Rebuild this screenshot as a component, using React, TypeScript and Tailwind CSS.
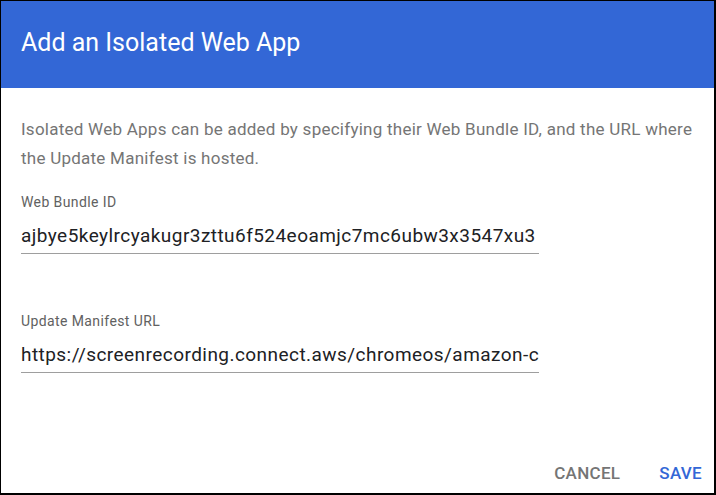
import React from "react";

export default function App() {
  return (
    <div
      className="w-[716px] h-[495px] border-l border-t border-r-2 border-b-2 border-black bg-white flex flex-col overflow-hidden"
      style={{ fontFamily: "Roboto, 'Noto Sans', sans-serif" }}
    >
      <div className="h-[87px] bg-[#3367d6] flex items-center px-[20px] shrink-0">
        <h1 className="text-white text-[25px] font-normal leading-none pb-[4px]">Add an Isolated Web App</h1>
      </div>
      <div className="flex-1 flex flex-col px-[20px] pt-[27px]">
        <p className="text-[17px] leading-[29px] text-[#757575] tracking-[0.25px] -mr-[10px]">
          Isolated Web Apps can be added by specifying their Web Bundle ID, and the URL where the Update Manifest is hosted.
        </p>
        <div className="mt-[20px] w-[518px]">
          <div className="text-[14px] leading-[18px] text-[#616161] tracking-[0.4px]">Web Bundle ID</div>
          <div className="mt-[13px] text-[19px] leading-[23px] text-[#202124] tracking-[0.45px] pb-[6px] border-b border-[#9e9e9e] whitespace-nowrap overflow-hidden">
            ajbye5keylrcyakugr3zttu6f524eoamjc7mc6ubw3x3547xu3
          </div>
        </div>
        <div className="mt-[58px] w-[518px]">
          <div className="text-[14px] leading-[18px] text-[#616161] tracking-[0.4px]">Update Manifest URL</div>
          <div className="mt-[13px] text-[19px] leading-[23px] text-[#202124] tracking-[0.45px] pb-[6px] border-b border-[#9e9e9e] whitespace-nowrap overflow-hidden">
            https://screenrecording.connect.aws/chromeos/amazon-c
          </div>
        </div>
        <div className="mt-auto flex justify-end items-center gap-[39px] pb-[7px] -mr-[8px]">
          <button className="text-[17px] font-medium text-[#757575] tracking-[0.3px]">CANCEL</button>
          <button className="text-[17px] font-medium text-[#3367d6] tracking-[0.3px]">SAVE</button>
        </div>
      </div>
    </div>
  );
}
